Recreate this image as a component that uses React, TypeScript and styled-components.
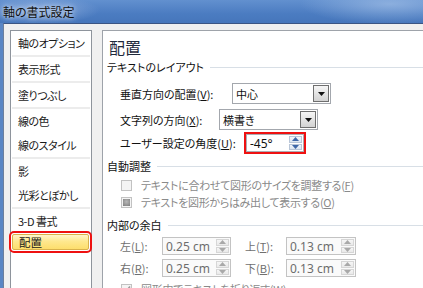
import React from "react";
import styled, { createGlobalStyle } from "styled-components";

const GlobalStyle = createGlobalStyle`
  html, body {
    margin: 0;
    padding: 0;
    background: #f0f0f0;
  }
  body {
    font-family: "Noto Sans CJK JP", "Noto Sans", sans-serif;
    font-size: 11px;
    font-feature-settings: "palt";
    color: #1a1a1a;
  }
`;

const Window = styled.div`
  width: 423px;
  height: 288px;
  overflow: hidden;
  background: #5a86c4;
  display: flex;
  flex-direction: column;
`;

const TitleBar = styled.div`
  height: 23px;
  flex: none;
  display: flex;
  align-items: center;
  padding-left: 3px;
  background:
    radial-gradient(ellipse 90px 20px at 390px 4px, rgba(160, 190, 230, 0.7), transparent),
    radial-gradient(ellipse 60px 14px at 40px 10px, rgba(150, 180, 225, 0.8), transparent),
    linear-gradient(to bottom, #6290cf 0%, #4b7cc1 60%, #4676bb 100%);
`;

const Title = styled.span`
  color: #111;
  font-size: 12px;
  line-height: 14px;
  text-shadow: 0 0 4px rgba(220, 232, 248, 0.9), 0 0 8px rgba(220, 232, 248, 0.6);
`;

const Body = styled.div`
  flex: 1;
  margin-left: 3px;
  border-top: 1px solid #3b5583;
  border-left: 1px solid #6d7f9c;
  background: #f0f0f0;
  display: flex;
  align-items: flex-start;
  padding: 6px 0 0 6px;
  overflow: hidden;
`;

const Nav = styled.div`
  width: 80px;
  height: 270px;
  flex: none;
  background: #fff;
  border: 1px solid #8e949c;
  display: flex;
  flex-direction: column;
`;

const NavItem = styled.div`
  height: 24px;
  display: flex;
  align-items: center;
  padding-left: 7px;
  font-size: 11px;
  letter-spacing: -0.5px;
  color: #1a1a1a;
  white-space: nowrap;
`;

const NavSep = styled.div`
  height: 2px;
  margin: 0 1px;
  background: #ececec;
`;

const NavSelected = styled.div`
  height: 14px;
  margin: 1px 2px 0 1px;
  padding-left: 6px;
  display: flex;
  align-items: center;
  font-size: 11.5px;
  border: 1px solid #d9b24c;
  border-radius: 2px;
  background: linear-gradient(to bottom, #fff6cc 0%, #fee88f 45%, #fdde6c 100%);
  outline: 2px solid #ee1111;
  outline-offset: 1px;
`;

const Panel = styled.div`
  width: 340px;
  height: 270px;
  flex: none;
  margin-left: 10px;
  background: #fff;
  border: 1px solid #9ea3aa;
  padding-left: 4px;
  display: flex;
  flex-direction: column;
`;

const Heading = styled.div`
  margin: 6px 0 0 2px;
  font-size: 16px;
  line-height: 20px;
  color: #1f2a3c;
`;

const Section = styled.div<{ $top: number }>`
  margin-top: ${(p) => p.$top}px;
  height: 14px;
  display: flex;
  align-items: center;
  line-height: 14px;
  color: #111;
  &::after {
    content: "";
    flex: 1;
    height: 1px;
    margin-left: 6px;
    background: #d8dfe6;
  }
`;

const Row = styled.div<{ $top: number; $height: number }>`
  margin: ${(p) => p.$top}px 0 0 13px;
  height: ${(p) => p.$height}px;
  display: flex;
  align-items: center;
`;

const Label = styled.span<{ $width: number; $muted?: boolean }>`
  width: ${(p) => p.$width}px;
  flex: none;
  white-space: nowrap;
  color: ${(p) => (p.$muted ? "#6f6f6f" : "#111")};
`;

const Combo = styled.div`
  width: 99px;
  height: 21px;
  box-sizing: border-box;
  border: 1px solid #a3a7ad;
  display: flex;
  align-items: center;
  background: #fff;
`;

const ComboText = styled.span`
  flex: 1;
  padding-left: 3px;
  color: #111;
`;

const ComboButton = styled.div`
  width: 16px;
  height: 17px;
  margin-right: 1px;
  box-sizing: border-box;
  border: 1px solid #6f6f6f;
  background: linear-gradient(to bottom, #f6f6f6 0%, #e4e4e4 50%, #d2d2d2 100%);
  display: flex;
  align-items: center;
  justify-content: center;
`;

const Spin = styled.div<{ $width: number; $disabled?: boolean; $marked?: boolean }>`
  width: ${(p) => p.$width}px;
  height: 18px;
  flex: none;
  box-sizing: border-box;
  border: 1px solid ${(p) => (p.$disabled ? "#c3c3c3" : "#abadb3")};
  background: ${(p) => (p.$disabled ? "#fafafa" : "#fff")};
  display: flex;
  align-items: stretch;
  ${(p) => (p.$marked ? "outline: 2px solid #ee1111; outline-offset: 0px; margin-left: 2px;" : "")}
`;

const SpinText = styled.span<{ $disabled?: boolean }>`
  flex: 1;
  display: flex;
  align-items: center;
  padding-left: 3px;
  font-size: 12px;
  color: ${(p) => (p.$disabled ? "#6d6d6d" : "#111")};
  font-family: "Noto Sans", "Noto Sans CJK JP", sans-serif;
`;

const SpinButtons = styled.div`
  width: 13px;
  margin: 1px 1px 1px 0;
  display: flex;
  flex-direction: column;
  gap: 1px;
`;

const SpinHalf = styled.div<{ $disabled?: boolean }>`
  flex: 1;
  display: flex;
  align-items: center;
  justify-content: center;
  border: 1px solid ${(p) => (p.$disabled ? "#d6d6d6" : "#b9c6d8")};
  background: ${(p) =>
    p.$disabled
      ? "linear-gradient(#f6f6f6, #e9e9e9)"
      : "linear-gradient(#f2f6fb, #dde6f1)"};
`;

const Gap = styled.div<{ $w: number }>`
  width: ${(p) => p.$w}px;
  flex: none;
`;

const CheckRow = styled.div<{ $top: number }>`
  margin: ${(p) => p.$top}px 0 0 14px;
  height: 16px;
  display: flex;
  align-items: center;
  gap: 9px;
  color: #8a8a8a;
  letter-spacing: -0.3px;
  white-space: nowrap;
`;

const Box = styled.div<{ $kind: "empty" | "mixed" | "checked" }>`
  width: 11px;
  height: 11px;
  box-sizing: border-box;
  border: 1px solid #c2c2c2;
  background: #f4f4f4;
  display: flex;
  align-items: center;
  justify-content: center;
  &::before {
    content: "";
    display: ${(p) => (p.$kind === "mixed" ? "block" : "none")};
    width: 7px;
    height: 7px;
    background: radial-gradient(circle at 50% 40%, #b8b8b8, #7e7e7e);
  }
`;

const Arrow = ({ up, color }: { up?: boolean; color: string }) => (
  <svg width="7" height="4" viewBox="0 0 7 4">
    <path d={up ? "M0 4 L3.5 0 L7 4 Z" : "M0 0 L7 0 L3.5 4 Z"} fill={color} />
  </svg>
);

const DropArrow = () => (
  <svg width="7" height="5" viewBox="0 0 7 5">
    <path d="M0 1 L7 1 L3.5 5 Z" fill="#111" />
  </svg>
);

const Check = () => (
  <svg width="9" height="9" viewBox="0 0 9 9">
    <path d="M1 4.5 L3.5 7 L8 1.5" stroke="#9a9a9a" strokeWidth="1.6" fill="none" />
  </svg>
);

const SpinBox = ({ value, width, disabled, marked }: { value: string; width: number; disabled?: boolean; marked?: boolean }) => (
  <Spin $width={width} $disabled={disabled} $marked={marked}>
    <SpinText $disabled={disabled}>{value}</SpinText>
    <SpinButtons>
      <SpinHalf $disabled={disabled}>
        <Arrow up color={disabled ? "#a9a9a9" : "#3f68a8"} />
      </SpinHalf>
      <SpinHalf $disabled={disabled}>
        <Arrow color={disabled ? "#a9a9a9" : "#3f68a8"} />
      </SpinHalf>
    </SpinButtons>
  </Spin>
);

const navItems: (string | null)[] = [
  "軸のオプション",
  null,
  "表示形式",
  null,
  "塗りつぶし",
  null,
  "線の色",
  "線のスタイル",
  null,
  "影",
  "光彩とぼかし",
  null,
  "3-D 書式",
];

export default function App() {
  return (
    <Window>
      <GlobalStyle />
      <TitleBar>
        <Title>軸の書式設定</Title>
      </TitleBar>
      <Body>
        <Nav>
          {navItems.map((item, i) => (item ? <NavItem key={i}>{item}</NavItem> : <NavSep key={i} />))}
          <NavSelected>配置</NavSelected>
        </Nav>
        <Panel>
          <Heading>配置</Heading>
          <Section $top={3}>テキストのレイアウト</Section>
          <Row $top={9} $height={21}>
            <Label $width={112}>
              垂直方向の配置(<u>V</u>):
            </Label>
            <Combo>
              <ComboText>中心</ComboText>
              <ComboButton>
                <DropArrow />
              </ComboButton>
            </Combo>
          </Row>
          <Row $top={5} $height={21}>
            <Label $width={99}>
              文字列の方向(<u>X</u>):
            </Label>
            <Combo>
              <ComboText>横書き</ComboText>
              <ComboButton>
                <DropArrow />
              </ComboButton>
            </Combo>
          </Row>
          <Row $top={4} $height={18}>
            <Label $width={124}>
              ユーザー設定の角度(<u>U</u>):
            </Label>
            <SpinBox value="-45°" width={58} marked />
          </Row>
          <Section $top={7}>自動調整</Section>
          <CheckRow $top={4}>
            <Box $kind="empty" />
            <span>
              テキストに合わせて図形のサイズを調整する(<u>F</u>)
            </span>
          </CheckRow>
          <CheckRow $top={1}>
            <Box $kind="mixed" />
            <span>
              テキストを図形からはみ出して表示する(<u>O</u>)
            </span>
          </CheckRow>
          <Section $top={8}>内部の余白</Section>
          <Row $top={5} $height={18}>
            <Label $width={42} $muted>
              左(<u>L</u>):
            </Label>
            <SpinBox value="0.25 cm" width={69} disabled />
            <Gap $w={14} />
            <Label $width={41} $muted>
              上(<u>T</u>):
            </Label>
            <SpinBox value="0.13 cm" width={70} disabled />
          </Row>
          <Row $top={4} $height={18}>
            <Label $width={42} $muted>
              右(<u>R</u>):
            </Label>
            <SpinBox value="0.25 cm" width={69} disabled />
            <Gap $w={14} />
            <Label $width={41} $muted>
              下(<u>B</u>):
            </Label>
            <SpinBox value="0.13 cm" width={70} disabled />
          </Row>
          <CheckRow $top={4}>
            <Box $kind="checked">
              <Check />
            </Box>
            <span>
              図形内でテキストを折り返す(<u>W</u>)
            </span>
          </CheckRow>
        </Panel>
      </Body>
    </Window>
  );
}
